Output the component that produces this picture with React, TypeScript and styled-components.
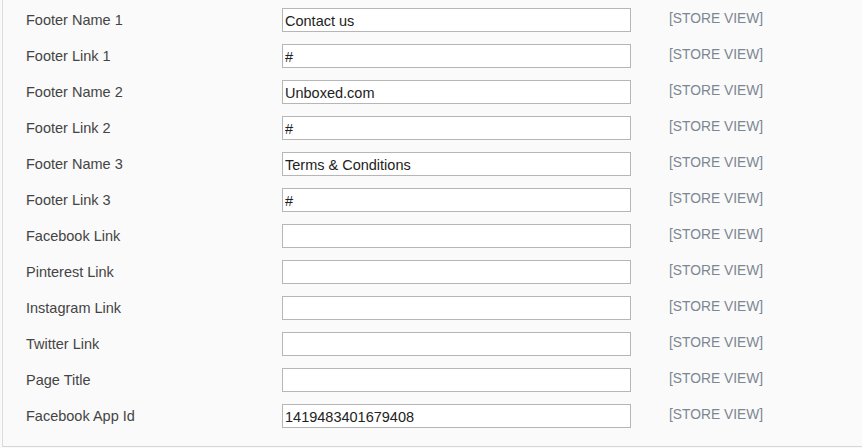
import styled, { createGlobalStyle } from "styled-components";

const GlobalStyle = createGlobalStyle`
  html, body {
    margin: 0;
    padding: 0;
    background: #fafafa;
  }
`;

const Panel = styled.div`
  width: 860px;
  height: 447px;
  margin-left: 2px;
  padding-top: 2px;
  box-sizing: border-box;
  border-left: 1px solid #dcdcdc;
  border-bottom: 1px solid #d6d6d6;
  background: #fafafa;
  font-family: "Liberation Sans", Arial, sans-serif;
`;

const Row = styled.div`
  display: grid;
  grid-template-columns: 279px 349px 38px auto;
  align-items: center;
  height: 36px;
`;

const Label = styled.label`
  padding-left: 23px;
  font-size: 14.5px;
  color: #444;
  margin-top: -1px;
`;

const Field = styled.input`
  grid-column: 2;
  box-sizing: border-box;
  width: 349px;
  height: 24px;
  margin: 0;
  padding: 1px 2px 0;
  border: 1px solid #b6b6b6;
  border-radius: 0;
  background: #fff;
  font-family: "Liberation Sans", Arial, sans-serif;
  font-size: 14.5px;
  color: #222;
  outline: none;
`;

const Scope = styled.span`
  grid-column: 4;
  font-size: 13.8px;
  color: #7c8792;
  margin-top: -3px;
`;

const fields: [string, string][] = [
  ["Footer Name 1", "Contact us"],
  ["Footer Link 1", "#"],
  ["Footer Name 2", "Unboxed.com"],
  ["Footer Link 2", "#"],
  ["Footer Name 3", "Terms & Conditions"],
  ["Footer Link 3", "#"],
  ["Facebook Link", ""],
  ["Pinterest Link", ""],
  ["Instagram Link", ""],
  ["Twitter Link", ""],
  ["Page Title", ""],
  ["Facebook App Id", "1419483401679408"],
];

export default function App() {
  return (
    <>
      <GlobalStyle />
      <Panel>
        {fields.map(([label, value]) => (
          <Row key={label}>
            <Label>{label}</Label>
            <Field type="text" defaultValue={value} />
            <Scope>[STORE VIEW]</Scope>
          </Row>
        ))}
      </Panel>
    </>
  );
}
